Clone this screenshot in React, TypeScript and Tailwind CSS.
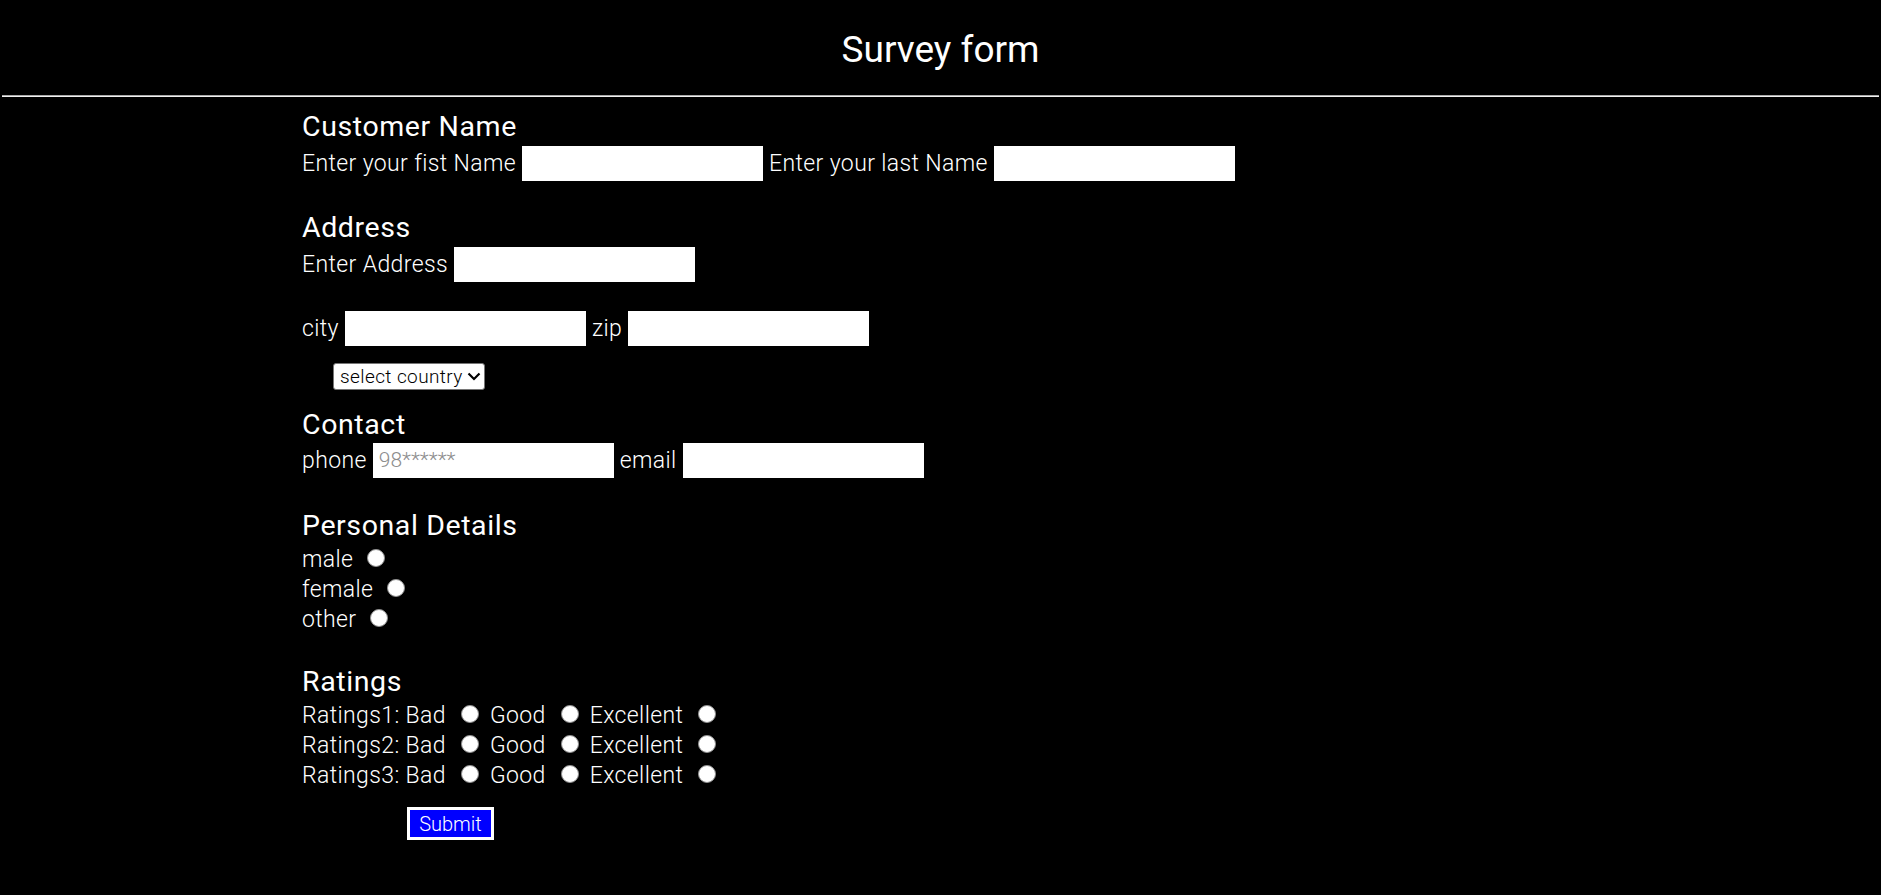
import React from "react";

function Radio({ name, className = "" }: { name: string; className?: string }) {
  return (
    <input
      type="radio"
      name={name}
      className={
        "appearance-none w-[18px] h-[18px] rounded-full bg-white border border-[#8f8f8f] mb-[3px] shrink-0 " +
        className
      }
    />
  );
}

function TextInput({ placeholder }: { placeholder?: string }) {
  return (
    <input
      type="text"
      placeholder={placeholder}
      className="w-[241px] h-[35px] bg-white border-0 outline-none pl-[6px] text-[21px] font-light tracking-normal text-black placeholder:text-[#8d8d8d]"
    />
  );
}

function Heading({ children, className = "" }: { children: React.ReactNode; className?: string }) {
  return (
    <h3 className={"text-[28.5px] leading-none font-normal tracking-[0.6px] " + className}>{children}</h3>
  );
}

export default function App() {
  const ratings = ["Ratings1:", "Ratings2:", "Ratings3:"];
  return (
    <div className="min-h-[895px] bg-black text-white font-['Roboto','Liberation_Sans',sans-serif]">
      <header className="h-[95px] pt-[30.5px]">
        <h1 className="text-center text-[37px] leading-none font-normal">Survey form</h1>
      </header>
      <div className="mx-[2px] h-[2px] border-t border-t-[#a8a8a8] border-b border-b-[#f0f0f0]" />
      <form
        className="pl-[302px] text-[23px] font-light tracking-[0.38px]"
        onSubmit={(e) => e.preventDefault()}
      >
        <Heading className="mt-[16.25px]">Customer Name</Heading>
        <div className="mt-[4px] h-[35px] flex items-center gap-[6px] leading-none">
          <label>Enter your fist Name</label>
          <TextInput />
          <label>Enter your last Name</label>
          <TextInput />
        </div>

        <Heading className="mt-[33.05px]">Address</Heading>
        <div className="mt-[4.65px] h-[35px] flex items-center gap-[6px] leading-none">
          <label>Enter Address</label>
          <TextInput />
        </div>
        <div className="mt-[28.75px] h-[35px] flex items-center gap-[6px] leading-none">
          <label>city</label>
          <TextInput />
          <label>zip</label>
          <TextInput />
        </div>
        <div className="mt-[17.15px] ml-[31px] flex">
          <div className="h-[27px] w-[152px] flex items-center justify-between border border-[#767676] rounded-[3px] bg-white text-black pl-[6px] pr-[3px] text-[19px] font-light tracking-[0.4px] leading-none">
            <span>select country</span>
            <svg width="14" height="9" viewBox="0 0 14 9" className="mt-[1px]">
              <path d="M1.5 1.5 L7 7 L12.5 1.5" fill="none" stroke="#000" strokeWidth="2.2" />
            </svg>
          </div>
        </div>

        <Heading className="mt-[21.2px]">Contact</Heading>
        <div className="mt-[3.45px] h-[35px] flex items-center gap-[6px] leading-none">
          <label>phone</label>
          <TextInput placeholder="98******" />
          <label>email</label>
          <TextInput />
        </div>

        <Heading className="mt-[33.85px]">Personal Details</Heading>
        <div className="mt-[4.2px]">
          {["male", "female", "other"].map((g) => (
            <div key={g} className="h-[30px] flex items-center leading-none">
              <label>{g}</label>
              <Radio name="gender" className="ml-[14px]" />
            </div>
          ))}
        </div>

        <Heading className="mt-[33.4px]">Ratings</Heading>
        <div className="mt-[4.2px]">
          {ratings.map((r, i) => (
            <div key={r} className="h-[30px] flex items-center leading-none">
              <span>{r} Bad</span>
              <Radio name={"r" + i} className="ml-[15px] mr-[11px]" />
              <span>Good</span>
              <Radio name={"r" + i} className="ml-[15px] mr-[11px]" />
              <span>Excellent</span>
              <Radio name={"r" + i} className="ml-[15px]" />
            </div>
          ))}
        </div>

        <div className="mt-[16.75px] ml-[105px] flex">
          <button
            type="submit"
            className="w-[87px] h-[33px] border-[3px] border-white bg-[#0000ff] text-white text-[20px] font-light tracking-normal leading-none flex items-center justify-center"
          >
            Submit
          </button>
        </div>
      </form>
    </div>
  );
}
